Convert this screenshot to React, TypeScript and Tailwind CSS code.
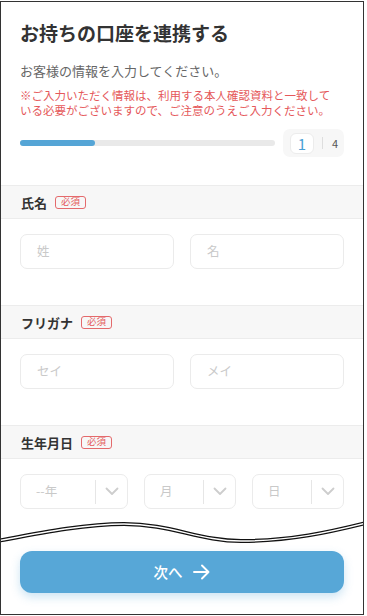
import React from "react";

const font = { fontFamily: '"Noto Sans CJK JP", "Noto Sans", sans-serif' };

function Badge() {
  return (
    <span className="ml-2 inline-flex h-[13px] w-[31px] items-center justify-center rounded-[3px] border border-[#e46a6c] text-[9.5px] leading-none text-[#e45a5c]">
      必須
    </span>
  );
}

function SectionHeader({ label }: { label: string }) {
  return (
    <div className="flex h-[34px] items-center border-y border-[#ececec] bg-[#f7f7f7] px-[20px]">
      <span className="text-[13px] font-bold leading-none text-[#333]">{label}</span>
      <Badge />
    </div>
  );
}

function TextInput({ placeholder }: { placeholder: string }) {
  return (
    <div className="flex h-[35px] flex-1 items-center rounded-[7px] border border-[#ebebeb] bg-white pl-[16px]">
      <span className="text-[12.5px] leading-none text-[#c9c9c9]">{placeholder}</span>
    </div>
  );
}

function Chevron() {
  return (
    <svg width="14" height="9" viewBox="0 0 14 9" fill="none">
      <path d="M1.5 1.5 L7 7 L12.5 1.5" stroke="#cdcdcd" strokeWidth="1.8" strokeLinecap="round" strokeLinejoin="round" />
    </svg>
  );
}

function Select({ placeholder, className }: { placeholder: string; className: string }) {
  return (
    <div className={"flex h-[35px] items-center rounded-[7px] border border-[#ebebeb] bg-white " + className}>
      <span className="flex-1 pl-[15px] text-[12.5px] leading-none text-[#c9c9c9]">{placeholder}</span>
      <div className="h-[24px] w-px bg-[#e6e6e6]" />
      <div className="flex w-[31px] items-center justify-center">
        <Chevron />
      </div>
    </div>
  );
}

export default function App() {
  return (
    <div className="h-[616px] w-[367px] bg-white" style={font}>
      <div className="relative mt-px flex h-[614px] w-[364px] flex-col overflow-hidden border border-[#333] bg-white">
        <div className="px-[19px] pt-[17px]">
          <h1 className="text-[19px] font-bold leading-[28px] text-[#333]">お持ちの口座を連携する</h1>
          <p className="mt-[14px] text-[13px] leading-[20px] text-[#666]">お客様の情報を入力してください。</p>
          <p className="mt-[7px] text-[11.5px] leading-[14.5px] text-[#e5585a]">
            ※ご入力いただく情報は、利用する本人確認資料と一致して
            <br />
            いる必要がございますので、ご注意のうえご入力ください。
          </p>
          <div className="mt-[12px] flex items-center gap-2">
            <div className="h-[6px] flex-1 rounded-full bg-[#e9e9e9]">
              <div className="h-full w-[75px] rounded-full bg-[#55a5d6]" />
            </div>
            <div className="flex h-[28px] w-[61px] items-center rounded-[7px] bg-[#f7f7f7] pl-[7px]">
              <div className="flex h-[21px] w-[24px] items-center justify-center rounded-[6px] border border-[#ececec] bg-white text-[15px] leading-none text-[#4a9fd5]">
                1
              </div>
              <div className="ml-[8px] h-[12px] w-px bg-[#dedede]" />
              <span className="ml-[9px] text-[11px] leading-none text-[#555]">4</span>
            </div>
          </div>
        </div>

        <div className="mt-[28px]">
          <SectionHeader label="氏名" />
          <div className="flex gap-4 px-[19px] pb-[36px] pt-[15px]">
            <TextInput placeholder="姓" />
            <TextInput placeholder="名" />
          </div>
          <SectionHeader label="フリガナ" />
          <div className="flex gap-4 px-[19px] pb-[36px] pt-[15px]">
            <TextInput placeholder="セイ" />
            <TextInput placeholder="メイ" />
          </div>
          <SectionHeader label="生年月日" />
          <div className="flex gap-4 px-[19px] pt-[15px]">
            <Select placeholder="--年" className="w-[108px]" />
            <Select placeholder="月" className="flex-1" />
            <Select placeholder="日" className="flex-1" />
          </div>
        </div>

        <div className="mt-[42px] px-[19px]">
          <button className="flex h-[42px] w-full items-center justify-center gap-[9px] rounded-[12px] bg-[#57a7d7] text-white shadow-[0_4px_10px_rgba(87,167,215,0.3)]">
            <span className="text-[14.5px] font-medium leading-none">次へ</span>
            <svg width="19" height="18" viewBox="0 0 19 18" fill="none">
              <path d="M2 9 H16.5 M10 2.5 L16.5 9 L10 15.5" stroke="white" strokeWidth="1.9" strokeLinecap="round" strokeLinejoin="round" />
            </svg>
          </button>
        </div>

        <svg className="pointer-events-none absolute left-[-1px] top-[510px]" width="366" height="40" viewBox="0 0 366 40" fill="none">
          <path d="M0 28.5 C 40 21, 85 12, 124 12 C 170 12, 200 29, 241 29 C 290 29, 330 20, 366 11" stroke="#111" strokeWidth="4" />
          <path d="M0 28.5 C 40 21, 85 12, 124 12 C 170 12, 200 29, 241 29 C 290 29, 330 20, 366 11" stroke="#fff" strokeWidth="1.4" />
        </svg>
      </div>
    </div>
  );
}
